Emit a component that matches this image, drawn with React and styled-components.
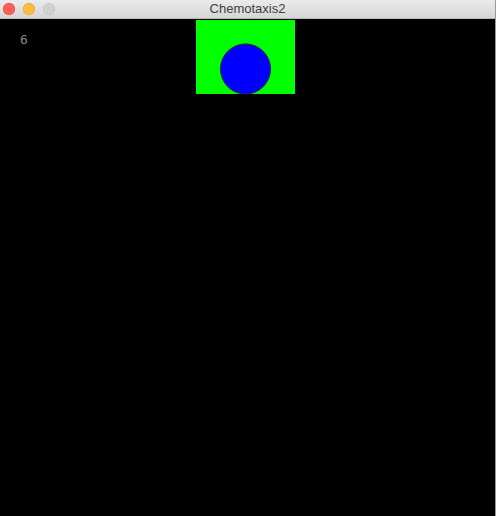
import React from "react";
import styled, { createGlobalStyle } from "styled-components";

const Global = createGlobalStyle`
  html, body { margin: 0; padding: 0; background: #ffffff; }
  body { width: 497px; height: 516px; overflow: hidden; font-family: "Liberation Sans", Arial, sans-serif; }
`;

const Window = styled.div`
  width: 495px;
  height: 516px;
  display: flex;
  flex-direction: column;
  border-right: 1px solid #9a9a9a;
  background: #000;
`;

const TitleBar = styled.div`
  height: 18px;
  flex: 0 0 auto;
  display: flex;
  align-items: center;
  position: relative;
  background: linear-gradient(#ebebeb, #d5d5d5);
  border-bottom: 1px solid #b8b8b8;
`;

const Lights = styled.div`
  display: flex;
  gap: 8px;
  padding-left: 3px;
  position: relative;
  z-index: 1;
`;

const Light = styled.span`
  width: 12px;
  height: 12px;
  border-radius: 50%;
  background: ${(p) => p.$color};
  box-shadow: inset 0 0 0 0.5px ${(p) => p.$edge};
`;

const Title = styled.div`
  position: absolute;
  left: 0;
  right: 0;
  text-align: center;
  font-size: 13px;
  color: #3f3f3f;
  line-height: 18px;
`;

const Canvas = styled.div`
  flex: 1;
  position: relative;
  background: #000;
`;

const Label = styled.span`
  position: absolute;
  left: 20px;
  top: 13px;
  font-family: "DejaVu Sans Mono", monospace;
  font-size: 13px;
  color: #8a8a8a;
`;

const Sketch = styled.svg`
  position: absolute;
  left: 0;
  top: 0;
`;

export default function App() {
  return (
    <>
      <Global />
      <Window>
        <TitleBar>
          <Lights>
            <Light $color="#fc5f57" $edge="#e0443e" />
            <Light $color="#fdbc3f" $edge="#dea236" />
            <Light $color="#d1d1d1" $edge="#bcbcbc" />
          </Lights>
          <Title>Chemotaxis2</Title>
        </TitleBar>
        <Canvas>
          <Label>6</Label>
          <Sketch width="495" height="497" viewBox="0 0 495 497">
            <rect x="196" y="1" width="99" height="74" fill="#00ff00" />
            <circle cx="245.5" cy="50" r="25" fill="#0000ff" stroke="#1a1a4a" strokeWidth="1" />
          </Sketch>
        </Canvas>
      </Window>
    </>
  );
}
